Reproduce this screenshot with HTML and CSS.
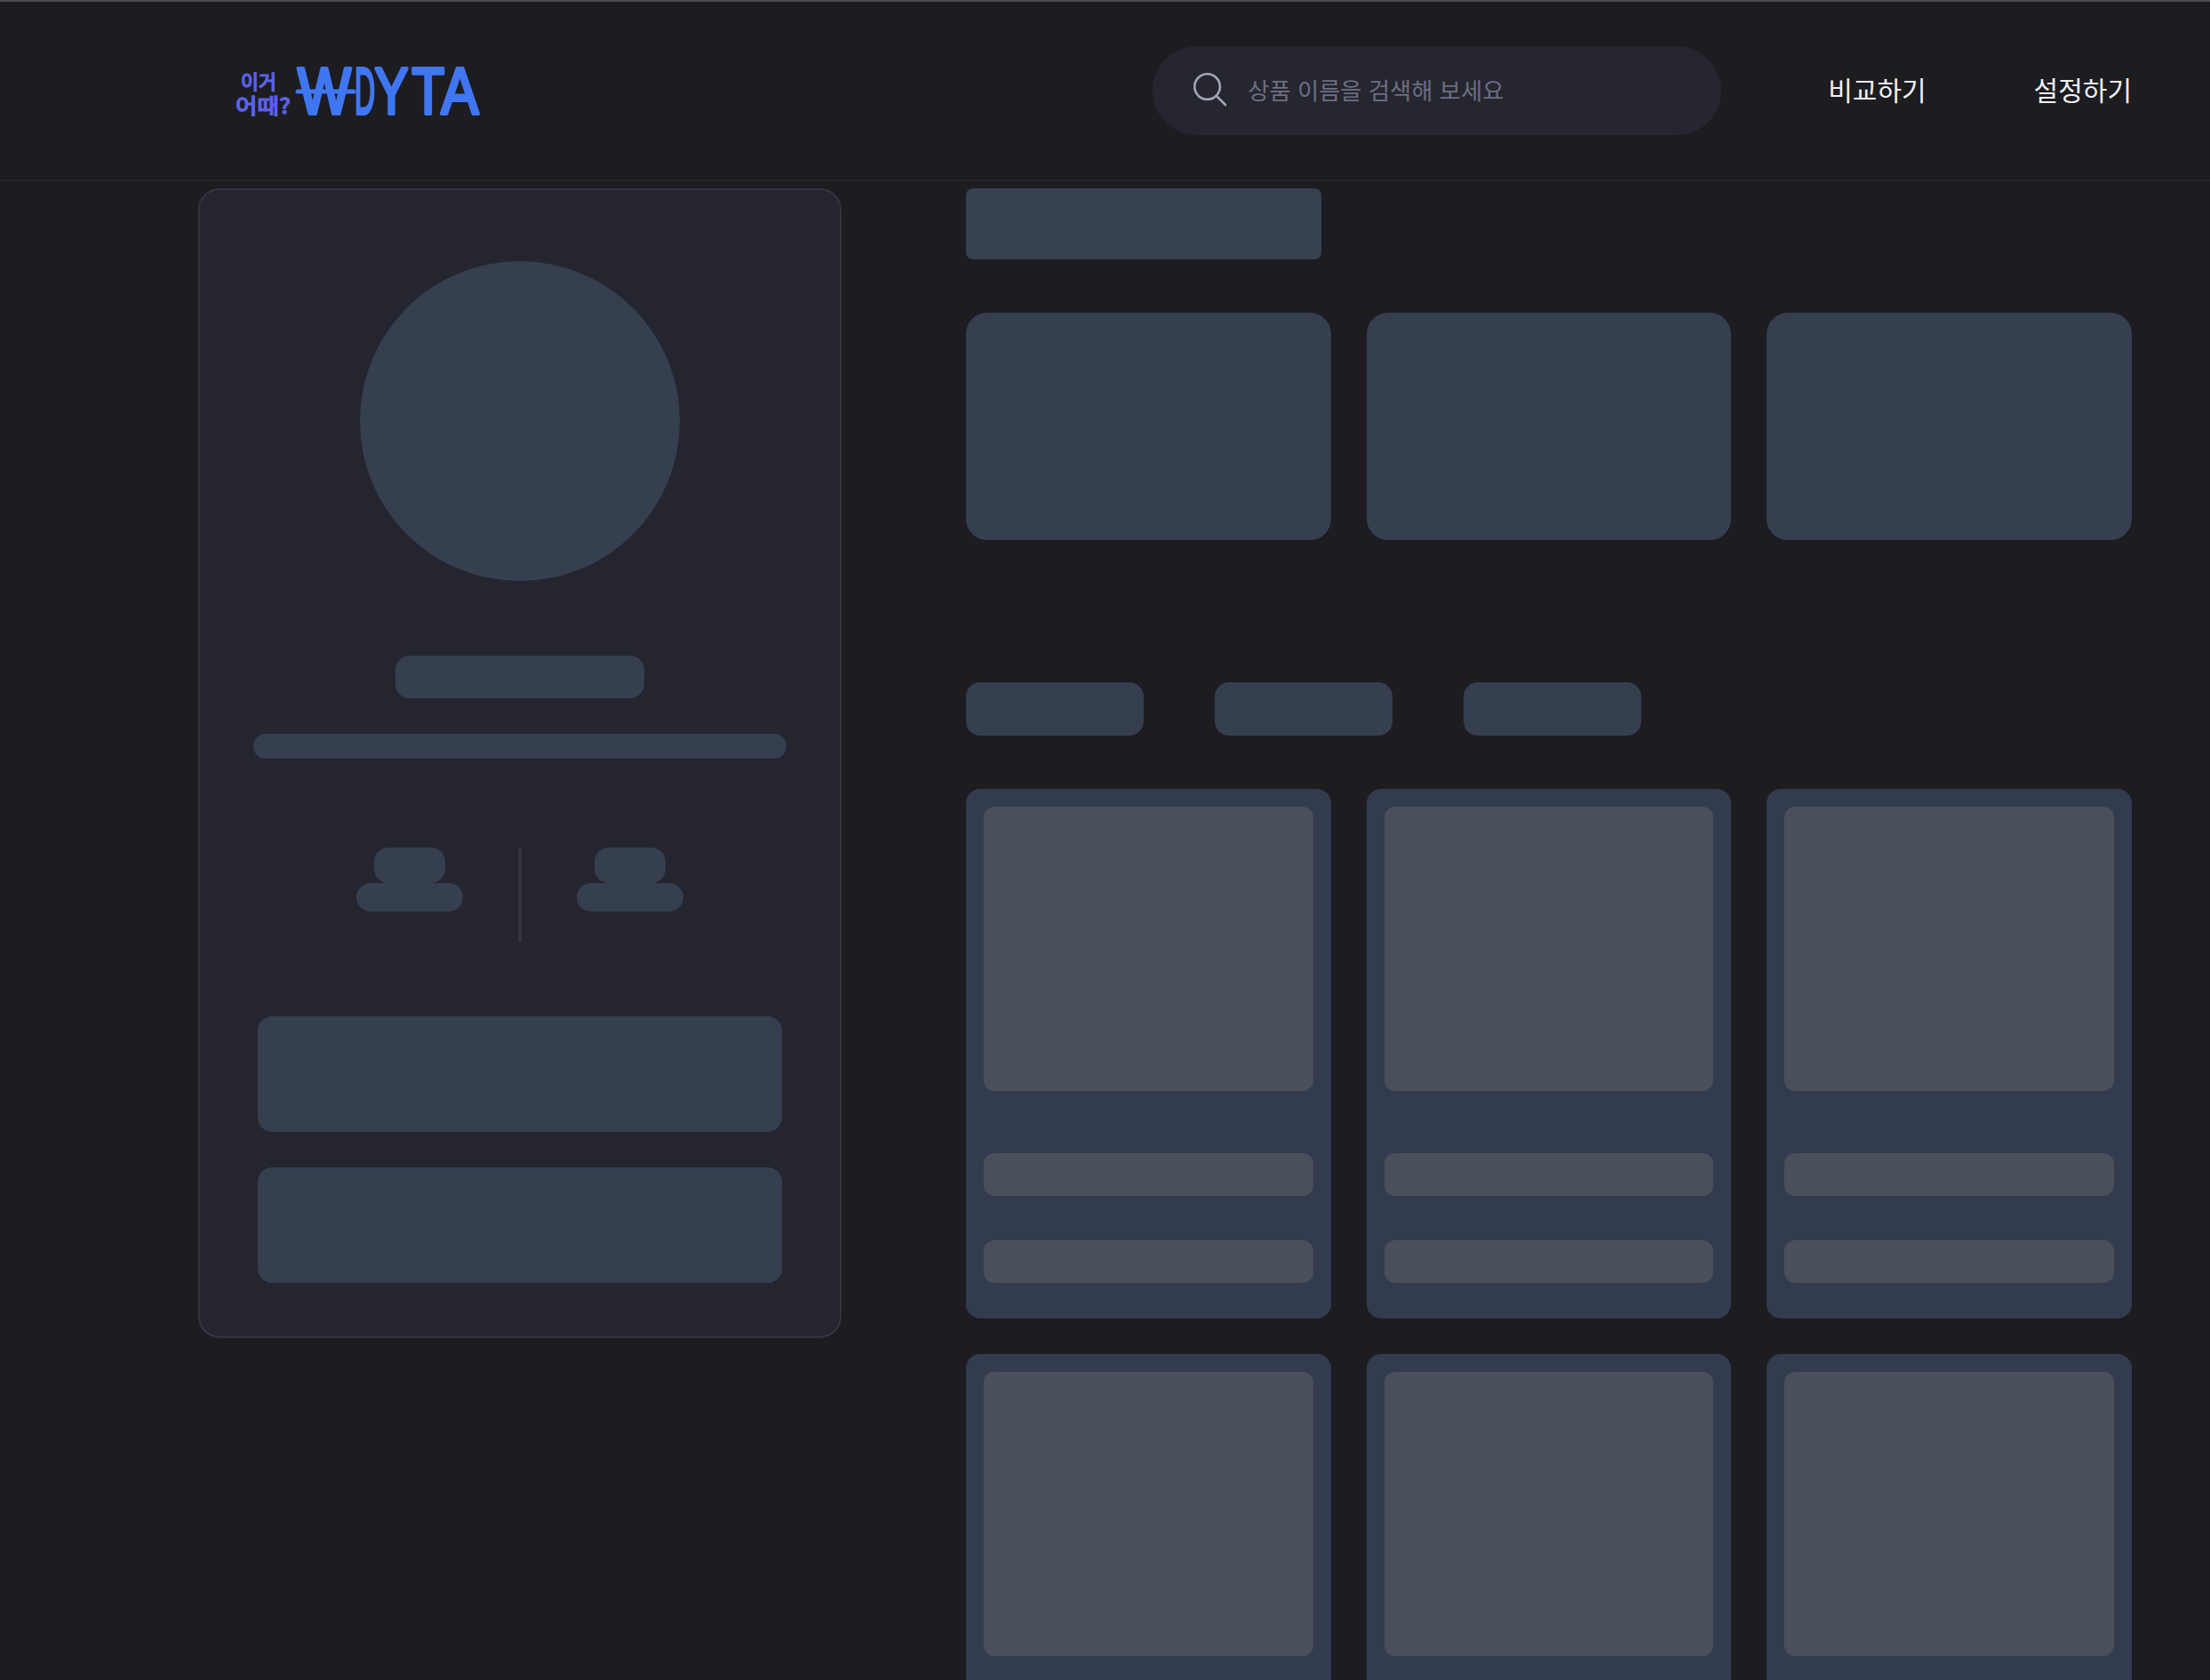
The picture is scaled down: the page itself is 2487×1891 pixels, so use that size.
FILE: index.html
```html
<!DOCTYPE html>
<html lang="ko">
<head>
    <meta charset="UTF-8">
    <title>WDYTA</title>
    <link rel="stylesheet" href="styles.css">
</head>
<body>
    <header class="gnb">
        <a class="logo" href="#">
            <svg class="logo-svg" viewBox="0 0 283 64" width="283" height="64">
                <text class="logo-sub">
                    <tspan x="9" y="30" font-size="22" textLength="40" lengthAdjust="spacingAndGlyphs">이거</tspan>
                    <tspan x="3" y="58" font-size="24" textLength="62" lengthAdjust="spacingAndGlyphs">어때?</tspan>
                </text>
                <line class="logo-bar" x1="73" y1="33" x2="136" y2="33"/>
                <text class="logo-main" y="58"><tspan x="73" textLength="60" lengthAdjust="spacingAndGlyphs">W</tspan><tspan x="137" textLength="23" lengthAdjust="spacingAndGlyphs">D</tspan><tspan x="159.5" textLength="38" lengthAdjust="spacingAndGlyphs">Y</tspan><tspan x="201.5" textLength="36.6" lengthAdjust="spacingAndGlyphs">T</tspan><tspan x="234.5" textLength="42" lengthAdjust="spacingAndGlyphs">A</tspan></text>
            </svg>
        </a>
        <div class="gnb-right">
            <label class="search-box">
                <svg class="search-icon" viewBox="0 0 38 38" fill="none" stroke="#a0a6b2" stroke-width="2.6" stroke-linecap="round">
                    <circle cx="15.6" cy="15.6" r="14.3"/>
                    <path d="M26 26l10 10"/>
                </svg>
                <input class="search-input" type="text" placeholder="상품 이름을 검색해 보세요">
            </label>
            <nav class="gnb-links">
                <a href="#">비교하기</a>
                <a href="#">설정하기</a>
            </nav>
        </div>
    </header>
    <main class="layout">
        <aside class="profile-card">
            <div class="skel avatar"></div>
            <div class="skel name-bar"></div>
            <div class="skel desc-bar"></div>
            <div class="stats">
                <div class="stat">
                    <div class="skel stat-num"></div>
                    <div class="skel stat-label"></div>
                </div>
                <div class="stat-divider"></div>
                <div class="stat">
                    <div class="skel stat-num"></div>
                    <div class="skel stat-label"></div>
                </div>
            </div>
            <div class="skel profile-btn"></div>
            <div class="skel profile-btn"></div>
        </aside>
        <section class="content">
            <div class="skel title-bar"></div>
            <div class="grid summary-grid">
                <div class="skel summary-card"></div>
                <div class="skel summary-card"></div>
                <div class="skel summary-card"></div>
            </div>
            <div class="tabs">
                <div class="skel tab"></div>
                <div class="skel tab"></div>
                <div class="skel tab"></div>
            </div>
            <div class="grid product-grid">
                <div class="product"><div class="product-img"></div><div class="product-line first"></div><div class="product-line"></div></div>
                <div class="product"><div class="product-img"></div><div class="product-line first"></div><div class="product-line"></div></div>
                <div class="product"><div class="product-img"></div><div class="product-line first"></div><div class="product-line"></div></div>
                <div class="product"><div class="product-img"></div><div class="product-line first"></div><div class="product-line"></div></div>
                <div class="product"><div class="product-img"></div><div class="product-line first"></div><div class="product-line"></div></div>
                <div class="product"><div class="product-img"></div><div class="product-line first"></div><div class="product-line"></div></div>
            </div>
        </section>
    </main>
</body>
</html>
```

FILE: styles.css
```css
html, body { margin: 0; padding: 0; height: 100%; overflow: hidden; background-color: #1c1c21; font-family: "Noto Sans CJK KR", "Noto Sans", sans-serif; }
a { color: inherit; text-decoration: none; }

.gnb { height: 200px; display: flex; align-items: center; justify-content: space-between; padding: 0 88px 0 262px; border-top: 2px solid #4a4a4f; border-bottom: 2px solid #252530; }
.logo { display: block; }
.logo-svg { display: block; overflow: visible; }
.logo-sub { fill: #5a63e8; stroke: #5a63e8; stroke-width: 1px; stroke-linejoin: round; font-family: "Noto Sans CJK KR", sans-serif; font-weight: 500; }
.logo-main { fill: #4076f2; stroke: #4076f2; stroke-width: 4px; stroke-linejoin: round; font-family: "Liberation Sans", sans-serif; font-size: 74px; }
.logo-bar { stroke: #4076f2; stroke-width: 5px; stroke-linecap: round; }
.gnb-right { display: flex; align-items: center; }
.search-box { width: 640px; height: 100px; box-sizing: border-box; display: flex; align-items: center; gap: 23px; padding: 0 46px; border-radius: 50px; background-color: #252630; }
.search-icon { width: 38px; height: 38px; flex: none; margin-bottom: 2px; }
.search-input { flex: 1; min-width: 0; border: none; outline: none; padding: 0; margin-bottom: 3px; background: none; color: #fff; font: inherit; font-size: 26.3px; }
.search-input::placeholder { color: #6e6e82; opacity: 1; }
.gnb-links { display: flex; gap: 121px; margin-left: 120px; margin-bottom: 4px; color: #f1f1f5; font-size: 30px; }

.layout { display: flex; align-items: flex-start; gap: 140px; padding: 8px 88px 0 223px; }
.skel { background-color: #353f50; }

.profile-card { width: 724px; height: 1294px; box-sizing: border-box; flex: none; display: flex; flex-direction: column; align-items: center; padding-top: 80px; background-color: #24252e; border: 2px solid #33343f; border-radius: 24px; }
.avatar { width: 360px; height: 360px; border-radius: 50%; }
.name-bar { width: 280px; height: 48px; margin-top: 84px; border-radius: 16px; }
.desc-bar { width: 600px; height: 28px; margin-top: 40px; border-radius: 14px; }
.stats { display: flex; justify-content: center; gap: 62px; margin-top: 100px; }
.stat { display: flex; flex-direction: column; align-items: center; }
.stat-num { width: 80px; height: 40px; border-radius: 16px; }
.stat-label { width: 120px; height: 32px; border-radius: 16px; }
.stat-divider { width: 4px; height: 106px; background-color: #33343f; }
.profile-btn { width: 590px; height: 130px; border-radius: 16px; }
.stats + .profile-btn { margin-top: 84px; }
.profile-btn + .profile-btn { margin-top: 40px; }

.content { flex: 1; min-width: 0; }
.title-bar { width: 400px; height: 80px; border-radius: 8px; background-color: #364151; }
.grid { display: grid; grid-template-columns: repeat(3, 1fr); gap: 40px; }
.summary-grid { margin-top: 60px; }
.summary-card { height: 256px; border-radius: 24px; }
.tabs { display: flex; gap: 80px; margin-top: 160px; }
.tab { width: 200px; height: 60px; border-radius: 16px; }
.product-grid { margin-top: 60px; }
.product { height: 596px; box-sizing: border-box; padding: 20px; background-color: #333c4e; border-radius: 16px; }
.product-img { height: 320px; background-color: #4a505b; border-radius: 12px; }
.product-line { height: 48px; margin-top: 50px; background-color: #4a505b; border-radius: 12px; }
.product-line.first { margin-top: 70px; }
```
